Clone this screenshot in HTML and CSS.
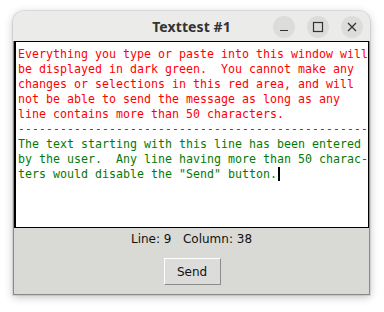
FILE: index.html
```html
<!DOCTYPE html>
<html>
<head>
<meta charset="utf-8">
<link rel="stylesheet" href="styles.css">
</head>
<body>
<div class="window">
  <div class="titlebar">
    <div class="title">Texttest #1</div>
    <div class="controls">
      <span class="ctl"><svg width="22" height="22" viewBox="0 0 22 22"><path d="M7 14.5h8" stroke="#333" stroke-width="1.2"/></svg></span>
      <span class="ctl"><svg width="22" height="22" viewBox="0 0 22 22"><rect x="6.5" y="6.5" width="9" height="9" fill="none" stroke="#333" stroke-width="1.2"/></svg></span>
      <span class="ctl"><svg width="22" height="22" viewBox="0 0 22 22"><path d="M7 7l8 8M15 7l-8 8" stroke="#333" stroke-width="1.3"/></svg></span>
    </div>
  </div>
  <div class="content">
    <div class="textbox"><div class="red">Everything you type or paste into this window will
be displayed in dark green.  You cannot make any
changes or selections in this red area, and will
not be able to send the message as long as any
line contains more than 50 characters.
--------------------------------------------------</div><div class="green">The text starting with this line has been entered
by the user.  Any line having more than 50 charac-
ters would disable the "Send" button.<span class="cursor"></span></div></div>
    <div class="status">Line: 9&nbsp;&nbsp; Column: 38</div>
    <div class="actions"><button class="send">Send</button></div>
  </div>
</div>
</body>
</html>
```
FILE: styles.css
```css
html, body {
  margin: 0;
  padding: 0;
  background: #ffffff;
  width: 384px;
  height: 312px;
  overflow: hidden;
}
.window {
  margin: 11px 0 0 13px;
  width: 357px;
  height: 284px;
  border-radius: 11px 11px 0 0;
  background: #d9d9d6;
  box-shadow: 0 2px 8px rgba(0,0,0,0.25), 0 0 0 1px rgba(0,0,0,0.08);
  display: flex;
  flex-direction: column;
  overflow: hidden;
}
.titlebar {
  height: 30px;
  background: #ebebea;
  position: relative;
  display: flex;
  align-items: center;
  justify-content: center;
  flex: none;
}
.title {
  font-family: "Noto Sans", "DejaVu Sans", sans-serif;
  font-weight: bold;
  font-size: 14px;
  color: #333;
  letter-spacing: 0.1px;
}
.controls {
  position: absolute;
  right: 7px;
  top: 5px;
  display: flex;
  gap: 12px;
}
.ctl {
  width: 22px;
  height: 22px;
  border-radius: 50%;
  background: #dcdcda;
  display: block;
}
.ctl svg { display: block; }
.content {
  flex: 1;
  display: flex;
  flex-direction: column;
  border-left: 1px solid #8a8a88;
  border-right: 1px solid #8a8a88;
  border-bottom: 1px solid #8a8a88;
}
.textbox {
  height: 180px;
  background: #fff;
  border: 1px solid #000;
  border-left-width: 2px;
  font-family: "DejaVu Sans Mono", monospace;
  font-size: 11.63px;
  line-height: 15px;
  padding: 5px 0 0 2px;
  white-space: pre;
  overflow: hidden;
}
.red { color: #ff0000; }
.green { color: #047a04; }
.cursor {
  display: inline-block;
  width: 2px;
  height: 14px;
  background: #000;
  vertical-align: -3px;
  margin-left: 1px;
}
.status {
  font-family: "DejaVu Sans", sans-serif;
  font-size: 12px;
  color: #111;
  text-align: center;
  margin-top: 3px;
  height: 16px;
  line-height: 16px;
}
.actions {
  display: flex;
  justify-content: center;
  margin-top: 11px;
}
.send {
  width: 57px;
  height: 27px;
  background: #dcdcda;
  border: 1px solid;
  border-color: #ffffff #8c8c8a #8c8c8a #ffffff;
  font-family: "DejaVu Sans", sans-serif;
  font-size: 12px;
  color: #111;
  padding: 0;
  margin-left: 1px;
}
```
